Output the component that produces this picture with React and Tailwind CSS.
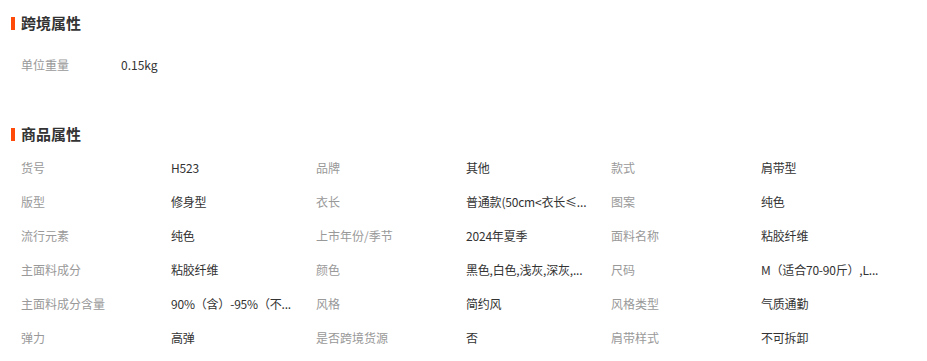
const crossBorder = [{ label: '单位重量', value: '0.15kg' }];

// values are shown as the page clips them
const attrs = [
  ['货号', 'H523'],
  ['品牌', '其他'],
  ['款式', '肩带型'],
  ['版型', '修身型'],
  ['衣长', '普通款(50cm<衣长≤...'],
  ['图案', '纯色'],
  ['流行元素', '纯色'],
  ['上市年份/季节', '2024年夏季'],
  ['面料名称', '粘胶纤维'],
  ['主面料成分', '粘胶纤维'],
  ['颜色', '黑色,白色,浅灰,深灰,...'],
  ['尺码', 'M（适合70-90斤）,L...'],
  ['主面料成分含量', '90%（含）-95%（不...'],
  ['风格', '简约风'],
  ['风格类型', '气质通勤'],
  ['弹力', '高弹'],
  ['是否跨境货源', '否'],
  ['肩带样式', '不可拆卸'],
];

const SectionTitle = ({ children }) => (
  <div className="flex items-center h-6 pl-[11px]">
    <span className="w-1 h-[13px] bg-[#ff4a0a]" />
    <h3 className="ml-[6px] text-[15px] font-bold text-[#333] leading-6">{children}</h3>
  </div>
);

const App = () => {
  return (
    <div
      className="w-[927px] h-[361px] bg-white overflow-hidden pt-[11px]"
      style={{ fontFamily: '"Noto Sans CJK SC", "Noto Sans", sans-serif' }}
    >
      <SectionTitle>跨境属性</SectionTitle>

      <div className="mt-[13px] pl-[21px]">
        {crossBorder.map((item) => (
          <div key={item.label} className="flex items-center h-[34px] text-xs">
            <span className="w-[100px] text-[#999]">{item.label}</span>
            <span className="text-[#333]">{item.value}</span>
          </div>
        ))}
      </div>

      <div className="mt-[40px]">
        <SectionTitle>商品属性</SectionTitle>
      </div>

      {/* 商品属性 grid */}
      <div className="mt-[5px] pl-[21px] grid grid-cols-[295px_295px_295px]">
        {attrs.map(([label, value]) => (
          <div key={label} className="flex items-center h-[34px] text-xs">
            <span className="w-[150px] shrink-0 text-[#999] whitespace-nowrap">{label}</span>
            <span className="text-[#333] whitespace-nowrap tracking-[-0.2px]">{value}</span>
          </div>
        ))}
      </div>
    </div>
  );
};

export default App;
